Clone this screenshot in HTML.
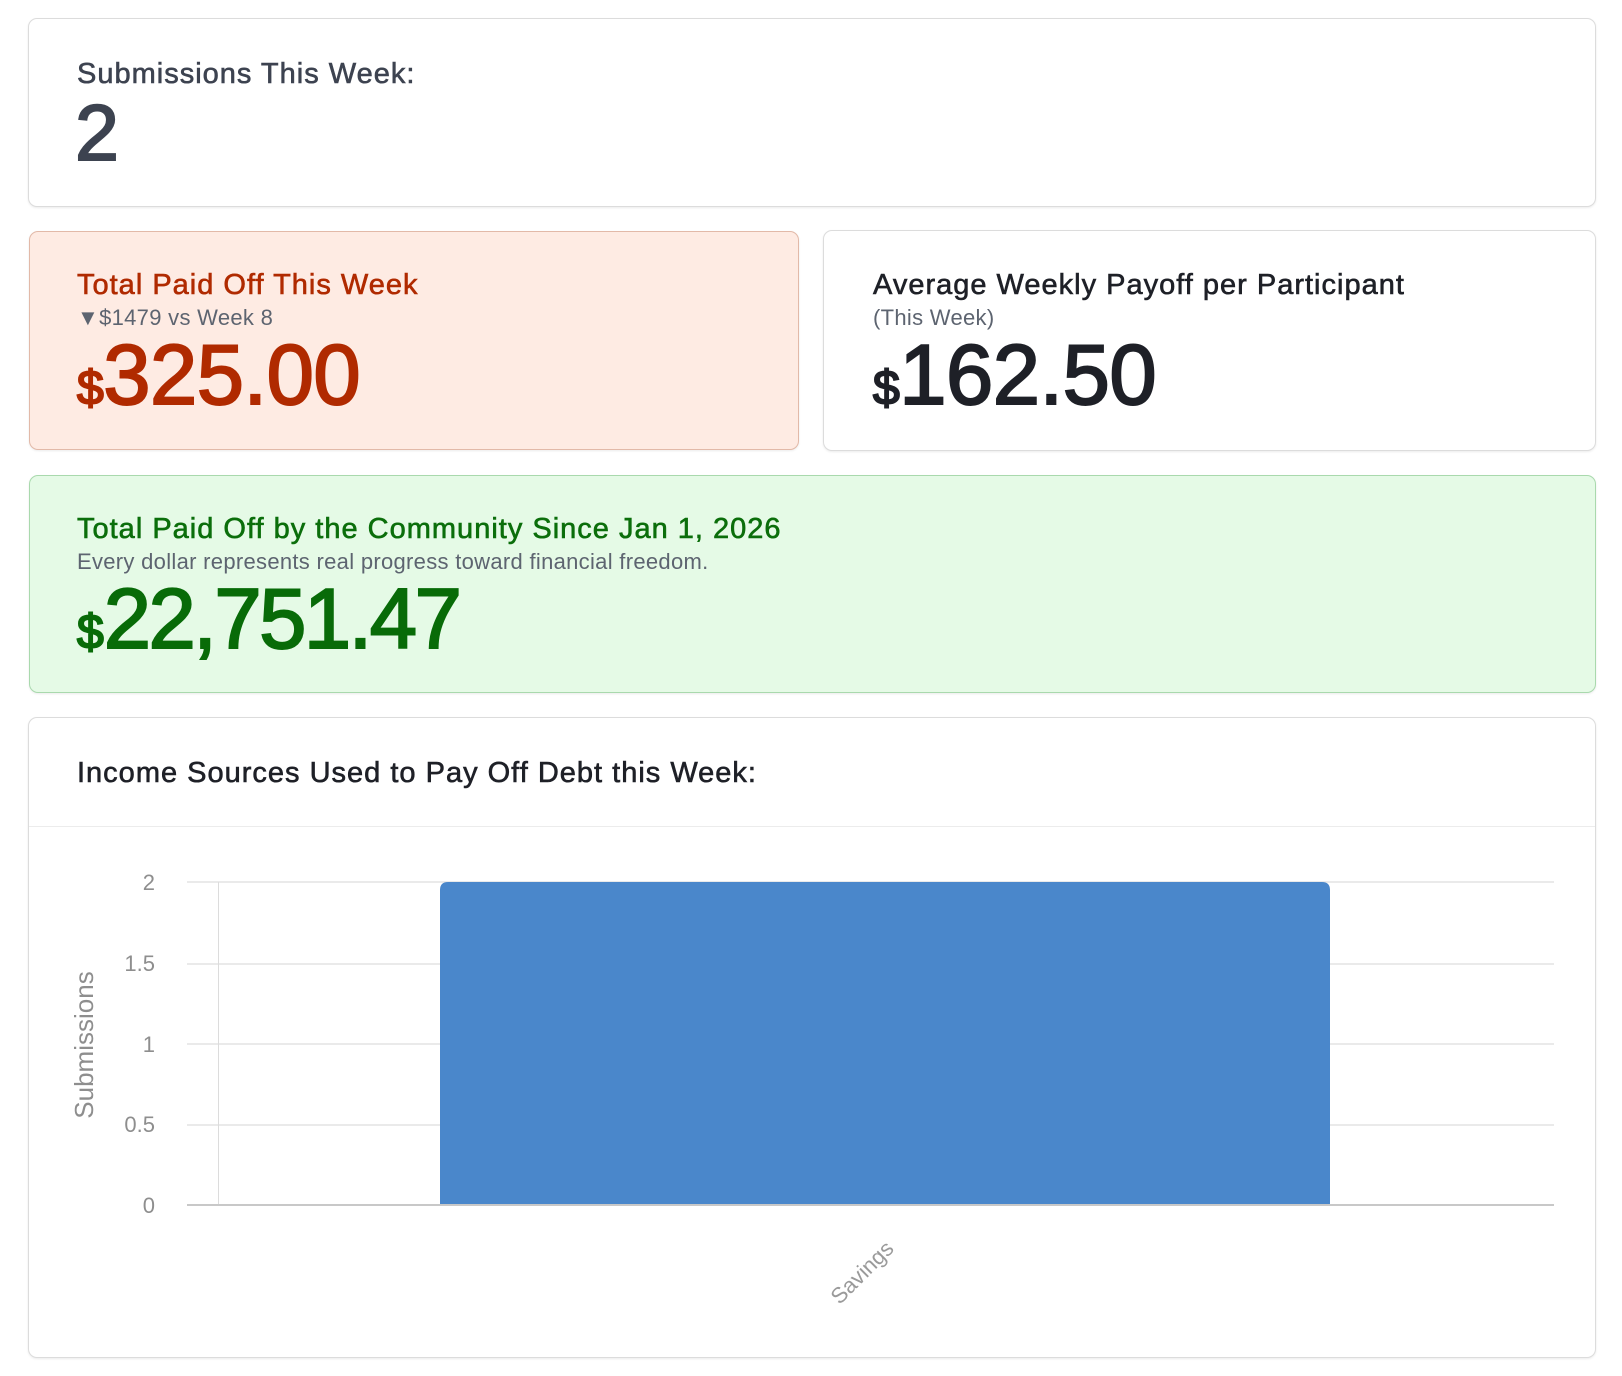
<!DOCTYPE html>
<html><head><meta charset="utf-8"><style>
*{margin:0;padding:0;box-sizing:border-box}
body{width:1622px;height:1376px;background:#fff;position:relative;font-family:"Liberation Sans",sans-serif;overflow:hidden}
.card{position:absolute;border:1px solid #dcdcdc;border-radius:9px;background:#fff;box-shadow:0 1px 2px rgba(0,0,0,.08)}
.t{position:absolute;line-height:1;white-space:nowrap}
.b{font-size:29px;letter-spacing:1px;-webkit-text-stroke:0.6px currentColor}
.n{font-weight:normal;letter-spacing:-0.5px;-webkit-text-stroke:2px currentColor}
</style></head><body>
<div class="card" style="left:28px;top:18px;width:1568px;height:189px"></div>
<div class="t b" style="left:77px;top:60px;color:#3d4350">Submissions This Week:</div>
<div class="t n" style="left:75px;top:93px;font-size:79px;color:#3d4350">2</div>

<div class="card" style="left:29px;top:231px;width:770px;height:219px;background:#feebe3;border-color:#e2b9a8"></div>
<div class="t b" style="left:77px;top:271px;color:#b02a00">Total Paid Off This Week</div>
<div class="t" style="left:77px;top:307px;font-size:22px;color:#5d6470;letter-spacing:0.3px">▼$1479 vs Week 8</div>
<div class="t n" style="left:77px;top:333px;font-size:85px;color:#b02a00"><span style="font-size:48px">$</span>325.00</div>

<div class="card" style="left:823px;top:230px;width:773px;height:221px"></div>
<div class="t b" style="left:873px;top:271px;color:#1e2027">Average Weekly Payoff per Participant</div>
<div class="t" style="left:873px;top:307px;font-size:22px;color:#5d6470;letter-spacing:0.3px">(This Week)</div>
<div class="t n" style="left:873px;top:333px;font-size:85px;color:#1e2027"><span style="font-size:48px">$</span>162.50</div>

<div class="card" style="left:29px;top:475px;width:1567px;height:218px;background:#e5fae6;border-color:#a9d9ad"></div>
<div class="t b" style="left:77px;top:515px;color:#0b6e0b">Total Paid Off by the Community Since Jan 1, 2026</div>
<div class="t" style="left:77px;top:551px;font-size:22px;color:#5d6470;letter-spacing:0.3px">Every dollar represents real progress toward financial freedom.</div>
<div class="t n" style="left:77px;top:577px;font-size:85px;color:#086b08;letter-spacing:-2.5px"><span style="font-size:48px;letter-spacing:0">$</span>22,751.47</div>

<div class="card" style="left:28px;top:717px;width:1568px;height:641px"></div>
<div style="position:absolute;left:29px;top:826px;width:1566px;height:1px;background:#ececec"></div>
<div class="t b" style="left:77px;top:759px;color:#1e2027">Income Sources Used to Pay Off Debt this Week:</div>

<svg style="position:absolute;left:0;top:0" width="1622" height="1376">
<g stroke="#e3e3e3" stroke-width="1.5">
<line x1="187" y1="882" x2="1554" y2="882"/>
<line x1="187" y1="964" x2="1554" y2="964"/>
<line x1="187" y1="1044" x2="1554" y2="1044"/>
<line x1="187" y1="1125" x2="1554" y2="1125"/>
</g>
<line x1="218.5" y1="882" x2="218.5" y2="1205" stroke="#dcdcdc" stroke-width="1"/>
<path d="M440 1205 V890 Q440 882 448 882 H1322 Q1330 882 1330 890 V1205 Z" fill="#4a87cb"/>
<line x1="187" y1="1205" x2="1554" y2="1205" stroke="#c8c8c8" stroke-width="2"/>
<g font-family="Liberation Sans" font-size="22" fill="#8e8e8e" text-anchor="end">
<text x="155" y="890">2</text>
<text x="155" y="971">1.5</text>
<text x="155" y="1052">1</text>
<text x="155" y="1132">0.5</text>
<text x="155" y="1213">0</text>
</g>
<text x="84" y="1045" font-family="Liberation Sans" font-size="26" fill="#8e8e8e" text-anchor="middle" transform="rotate(-90 84 1045)" dy="9">Submissions</text>
<text x="895" y="1250" font-family="Liberation Sans" font-size="22" fill="#9a9a9a" text-anchor="end" transform="rotate(-45 895 1250)">Savings</text>
</svg>
</body></html>
